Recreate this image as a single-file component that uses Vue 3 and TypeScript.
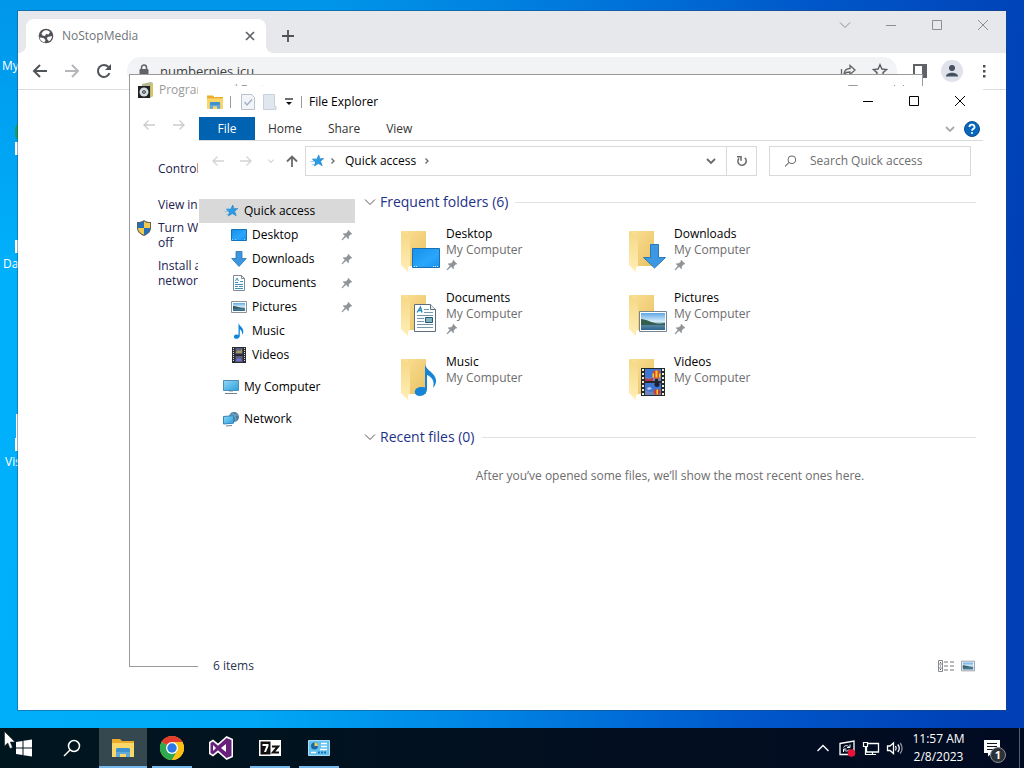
<script setup lang="ts">
import { ref } from 'vue'

interface NavItem { label: string; icon: string; level: number; pinned?: boolean; gap?: boolean }
interface Folder { name: string; art: string; pinned: boolean }
interface Task { label: string; icon: string; state: string }

const nav: NavItem[] = [
  { label: 'Quick access', icon: 'star', level: 1 },
  { label: 'Desktop', icon: 'desktop', level: 2, pinned: true },
  { label: 'Downloads', icon: 'download', level: 2, pinned: true },
  { label: 'Documents', icon: 'document', level: 2, pinned: true },
  { label: 'Pictures', icon: 'picture', level: 2, pinned: true },
  { label: 'Music', icon: 'music', level: 2 },
  { label: 'Videos', icon: 'film', level: 2 },
  { label: 'My Computer', icon: 'computer', level: 1, gap: true },
  { label: 'Network', icon: 'network', level: 1, gap: true },
]
const folders: Folder[] = [
  { name: 'Desktop', art: 'art-desktop', pinned: true },
  { name: 'Downloads', art: 'art-download', pinned: true },
  { name: 'Documents', art: 'art-document', pinned: true },
  { name: 'Pictures', art: 'art-picture', pinned: true },
  { name: 'Music', art: 'art-music', pinned: false },
  { name: 'Videos', art: 'art-video', pinned: false },
]
const tasks: Task[] = [
  { label: 'Start', icon: 'windows', state: '' },
  { label: 'Search', icon: 'search', state: '' },
  { label: 'File Explorer', icon: 'explorer', state: 'active' },
  { label: 'Chrome', icon: 'chrome', state: 'open' },
  { label: 'Visual Studio', icon: 'vs', state: '' },
  { label: '7-Zip', icon: 'zip', state: 'open' },
  { label: 'Control Panel', icon: 'panel', state: 'open' },
]
const iconSize: Record<string, string> = { windows: 'i22', search: 'i22', explorer: 'i22', chrome: 'i24', vs: 'i24' }
const tray = ['up', 'sync', 'monitor', 'speaker']
const ribbon = ['File', 'Home', 'Share', 'View']
const selected = ref('Quick access')
const address = ref('numberpies.icu')
const query = ref('')
</script>

<template>
  <svg class="defs" width="0" height="0" aria-hidden="true">
    <defs>
      <linearGradient id="g-back" x1="0" y1="0" x2="1" y2="1"><stop offset="0" stop-color="#fce197" /><stop offset="1" stop-color="#e9c162" /></linearGradient>
      <linearGradient id="g-flap" x1="0" y1="0" x2="0" y2="1"><stop offset="0" stop-color="#f6d885" /><stop offset="1" stop-color="#ffeeb6" /></linearGradient>
      <linearGradient id="g-blue" x1="0" y1="0" x2="1" y2="1"><stop offset="0" stop-color="#1690ec" /><stop offset="0.6" stop-color="#2aa6fb" /><stop offset="1" stop-color="#1793f0" /></linearGradient>
      <linearGradient id="g-sky" x1="0" y1="0" x2="0" y2="1"><stop offset="0" stop-color="#5fa8e6" /><stop offset="0.5" stop-color="#d9eefa" /><stop offset="0.65" stop-color="#5f8ea8" /><stop offset="1" stop-color="#2e648e" /></linearGradient>
      <linearGradient id="g-pc" x1="0" y1="0" x2="1" y2="1"><stop offset="0" stop-color="#8fd9f6" /><stop offset="1" stop-color="#2c9edb" /></linearGradient>
    </defs>
    <symbol id="chev" viewBox="0 0 12 12"><path d="M1 3.5l5 5 5-5" fill="none" stroke="currentColor" /></symbol>
    <symbol id="chev-b" viewBox="0 0 12 12"><path d="M2 4l4 4 4-4" fill="none" stroke="currentColor" stroke-width="1.8" /></symbol>
    <symbol id="right" viewBox="0 0 8 8"><path d="M2.500 1.500L5 4 2.500 6.500" fill="none" stroke="currentColor" stroke-width="1.300" /></symbol>
    <symbol id="min" viewBox="0 0 12 12"><path d="M1 6.500h10" stroke="currentColor" /></symbol>
    <symbol id="max" viewBox="0 0 12 12"><path d="M1.500 1.500h9v9h-9z" fill="none" stroke="currentColor" /></symbol>
    <symbol id="close" viewBox="0 0 12 12"><path d="M1 1l10 10M11 1L1 11" fill="none" stroke="currentColor" /></symbol>
    <symbol id="back" viewBox="0 0 16 16"><path d="M15 8H2M8 2L2 8l6 6" fill="none" stroke="currentColor" stroke-width="2" /></symbol>
    <symbol id="fwd" viewBox="0 0 16 16"><path d="M1 8h13M8 2l6 6-6 6" fill="none" stroke="currentColor" stroke-width="2" /></symbol>
    <symbol id="back-s" viewBox="0 0 12 12"><path d="M12 6H1M5.500 1.500L1 6l4.500 4.500" fill="none" stroke="currentColor" stroke-width="1.300" /></symbol>
    <symbol id="fwd-s" viewBox="0 0 12 12"><path d="M0 6h11M6.500 1.500L11 6l-4.500 4.500" fill="none" stroke="currentColor" stroke-width="1.300" /></symbol>
    <symbol id="up-s" viewBox="0 0 12 12"><path d="M6 12V1.500M1 6.500l5-5 5 5" fill="none" stroke="currentColor" stroke-width="1.800" /></symbol>
    <symbol id="reload" viewBox="0 0 16 16"><path d="M13.500 10.200A6 6 0 1 1 12.400 3.900L14 5.500" fill="none" stroke="currentColor" stroke-width="2" /><path d="M15 1v6H9z" fill="currentColor" /></symbol>
    <symbol id="refresh" viewBox="0 0 12 12"><path d="M8.800 2.900A4.200 4.200 0 1 1 3 3.200" fill="none" stroke="currentColor" stroke-width="1.500" /><path d="M1 1.800h4v4" fill="none" stroke="currentColor" stroke-width="1.500" /></symbol>
    <symbol id="globe" viewBox="0 0 16 16"><circle cx="8" cy="8" r="7.300" fill="#50545a" /><path d="M1.500 9.500l4 .5 2 2-1 2.500C4 14 2 12 1.500 9.500zM5 3.500C7 1.500 10 2 12 4l-1.500 2.500L8 6 7 8 4.500 7.500l-1-2zM9.500 9l4.500-1c0 2.500-1.500 4.500-3 5.200L9 11z" fill="#fff" /></symbol>
    <symbol id="lock" viewBox="0 0 12 14"><rect x="1.500" y="5" width="9" height="8" rx="1" fill="#5f6368" /><path d="M3.500 5.500V3.500a2.500 2.500 0 0 1 5 0v2" fill="none" stroke="#5f6368" stroke-width="1.500" /></symbol>
    <symbol id="share" viewBox="0 0 16 16"><path d="M1.500 6v8.500h11V12M4 11c.5-4 3-5.500 6-5.500V2.500L15 7l-5 4.500V9C7.500 9 5.500 9.500 4 11z" fill="none" stroke="#5f6368" stroke-width="1.300" /></symbol>
    <symbol id="outline-star" viewBox="0 0 16 16"><path d="M8 1.800l1.900 4.300 4.600.4-3.500 3.100 1.100 4.600L8 11.700l-4.100 2.500L5 9.600 1.500 6.500l4.600-.4z" fill="none" stroke="#5f6368" stroke-width="1.500" /></symbol>
    <symbol id="side" viewBox="0 0 16 16"><path d="M2 2h12v12H2z" fill="none" stroke="#5f6368" stroke-width="2" /><path d="M10 1h5v14h-5z" fill="#5f6368" /></symbol>
    <symbol id="user" viewBox="0 0 22 22"><circle cx="11" cy="11" r="11" fill="#dfe2ea" /><circle cx="11" cy="8" r="3" fill="#46505f" /><path d="M5 16.500c0-5 12-5 12 0z" fill="#46505f" /></symbol>
    <symbol id="dots" viewBox="0 0 16 16"><path d="M7 2h2.500v2.500H7zM7 7h2.500v2.500H7zM7 12h2.500v2.500H7z" fill="#4d5156" /></symbol>
    <symbol id="plus" viewBox="0 0 12 12"><path d="M6 0v12M0 6h12" stroke="#4d5156" stroke-width="1.800" /></symbol>
    <symbol id="tab-x" viewBox="0 0 12 12"><path d="M2 2l8 8M10 2l-8 8" stroke="#5f6368" stroke-width="1.700" /></symbol>
    <symbol id="programs" viewBox="0 0 16 16"><path d="M4 2l9-2 2 1v13l-3 2H4z" fill="#b5b98f" /><path d="M13 1l2 1v12l-2 1z" fill="#d9c65c" /><path d="M0 4h12v12H0z" fill="#222" /><circle cx="6" cy="10" r="4.500" fill="#d3dde4" /><circle cx="6" cy="10" r="1.800" fill="#222" /><circle cx="6" cy="10" r=".8" fill="#fff" /></symbol>
    <symbol id="shield" viewBox="0 0 16 16"><path d="M8 0c2 1.700 4.500 2.200 7 2v6c0 4-3.500 6.500-7 8-3.500-1.500-7-4-7-8V2c2.500.2 5-.3 7-2z" fill="#59626a" /><path d="M8 1.500V8H2V3c2.500 0 4.500-.5 6-1.500zM8 8h6c0 3.500-3 5.500-6 6.700z" fill="#2370b8" /><path d="M8 1.500C9.500 2.500 11.500 3 14 3v5H8zM2 8h6v6.700C5 13.500 2 11.500 2 8z" fill="#f3cb4a" /></symbol>
    <symbol id="explorer" viewBox="0 0 22 20"><path d="M0 1h8l2 2h12v16H0z" fill="#e9ac2b" /><path d="M0 5h22v14H0z" fill="#fbd669" /><path d="M4 19v-8l1-1h12l1 1v8h-4v-4H8v4z" fill="#3c93cf" /><path d="M4 19v-5h14v5h-4v-3H8v3z" fill="#60a9d8" /></symbol>
    <symbol id="props" viewBox="0 0 14 16"><path d="M.5.500h10l3 3v12H.5z" fill="#f1f4f8" stroke="#b9c1cb" /><path d="M3.500 8l2.500 3 5-5.500" fill="none" stroke="#9fb0c4" stroke-width="1.300" /></symbol>
    <symbol id="newf" viewBox="0 0 14 16"><path d="M.5.500h11v12h1.500v3H.5z" fill="#e1e7ef" stroke="#c8d0db" /></symbol>
    <symbol id="drop" viewBox="0 0 8 8"><path d="M0 1h8" stroke="#111" stroke-width="1.200" /><path d="M1 4h6L4 7z" fill="#111" /></symbol>
    <symbol id="help" viewBox="0 0 16 16"><circle cx="8" cy="8" r="7.500" fill="#0668bd" stroke="#0e4f8f" /><path d="M5.500 6a2.500 2.300 0 1 1 3.700 1.900C8.300 8.400 8 8.800 8 9.800" fill="none" stroke="#fff" stroke-width="1.800" /><circle cx="8" cy="12" r="1.100" fill="#fff" /></symbol>
    <symbol id="star" viewBox="0 0 16 16"><path d="M9.800 2l1 3.800 4-.3-3.200 2.800 1.600 4.400-3.900-2.200L5.300 13l1.200-4-3-2.500 4.200-.3z" fill="#2a9be4" stroke="#1c7cc4" stroke-width=".6" /><path d="M3.500 5.500h3M1.500 8.500h3.500M3 11.500h2" stroke="#7cc4f2" stroke-width=".8" /></symbol>
    <symbol id="desktop" viewBox="0 0 16 16"><path d="M.5 2.500h15v11H.5z" fill="url(#g-blue)" stroke="#1673ba" /><path d="M1 12.500h14" stroke="#8bd0ff" stroke-dasharray="1 2 1 8 1 1" /></symbol>
    <symbol id="download" viewBox="0 0 16 16"><path d="M5 .5h6v7h4.300L8 15.500.7 7.500H5z" fill="#3a96de" stroke="#2c76b6" stroke-width=".8" /></symbol>
    <symbol id="document" viewBox="0 0 16 16"><path d="M2.500.500h8l3 3v12h-11z" fill="#fff" stroke="#7e8b96" /><path d="M10.500.5v3h3" fill="none" stroke="#7e8b96" /><path d="M4.500 6L6 3l1.500 3M4 7.500h3M9 6.500h3M4 9.500h8M4 11.500h3M8 11.500h4M4 13.500h8" fill="none" stroke="#3b92bd" /></symbol>
    <symbol id="picture" viewBox="0 0 16 12"><path d="M.5.500h15v11H.5z" fill="#fff" stroke="#8a939b" /><path d="M2 2h12v8H2z" fill="url(#g-sky)" /><path d="M2 5c3 0 6 1.500 12 2.500L2 8z" fill="#365d5c" /></symbol>
    <symbol id="music" viewBox="0 0 16 16"><path d="M7.500 0C8 3 13 4.500 12.300 9.500c-.3 1-.7 1.500-1.200 2 .3-3-1-4.500-2.300-5V13c-.2 2-2 3-4 2.800-2.700-.5-2.500-3.800.3-4.300.9-.2 1.700 0 2.400.4z" fill="#1285d8" /></symbol>
    <symbol id="film" viewBox="0 0 16 16"><path d="M1 0h14v16H1z" fill="#2c2c30" /><path d="M2.500 1v14M13.500 1v14" stroke="#d9dccb" stroke-dasharray="1 1" /><path d="M4.500 1h7v6h-7zM4.500 9h7v6h-7z" fill="#5a5f83" /><path d="M5 5l2-2 2 1 2-2v4H5z" fill="#a89a5c" /><path d="M5 13l2-2 3 1 1 2H5z" fill="#6e72d0" /></symbol>
    <symbol id="video" viewBox="0 0 24 28"><path d="M0 0h24v28H0z" fill="#27282b" /><path d="M2 1v27M22 1v27" stroke="#eef0da" stroke-width="2" stroke-dasharray="2 2" /><path d="M4 1h16v12H4zM4 15h16v12H4z" fill="#3f76d2" /><path d="M4 9l5 1 5-2 6 2v3H4zM4 22l6 2 10-2v5H4z" fill="#6d86c0" /><path d="M4 10l4 1 4-1v3H4z" fill="#b83943" /><ellipse cx="15.500" cy="6.500" rx="4" ry="4.500" fill="#d84b2e" /><path d="M14.500 2.500h2v7h-2z" fill="#f3cc36" /><path d="M11.500 5.500h1.500v4h-1.500zM18 5.500h1.500v4H18z" fill="#f3cc36" /><path d="M14 11h3v2h-3z" fill="#222" /><circle cx="16" cy="16.500" r="2.500" fill="#1e1f35" /><ellipse cx="16" cy="24" rx="3.500" ry="2.800" fill="#d03c2c" /><path d="M15.500 21.500h1.500v5h-1.500z" fill="#f3cc36" /><path d="M6 20l3-1 2 2-4 1z" fill="#c4cdf0" /></symbol>
    <symbol id="computer" viewBox="0 0 16 16"><path d="M.5 1.500h15v10H.5z" fill="url(#g-pc)" stroke="#4d8fb4" /><path d="M2 14.500h12" stroke="#6b8291" /><path d="M6 12h4v1H6z" fill="#bbcdd6" /></symbol>
    <symbol id="network" viewBox="0 0 16 16"><circle cx="11" cy="6" r="5" fill="#4a7f9f" /><path d="M9 1.500c3 3 4 6 4 9M7 4h8" fill="none" stroke="#7fb0cb" /><path d="M.5 5.500l10-.8v7.500l-10 .8z" fill="url(#g-pc)" stroke="#2f86ba" /><path d="M3 15l6-.5" stroke="#6b8291" /></symbol>
    <symbol id="pin" viewBox="0 0 12 12"><path d="M7 1l4 4-1.500.3L7.700 7.300 7.500 10 5 7.500 1.500 11 .8 10.800 4 6.800 2 4.800l3-.3L7 2.500z" fill="#8e9398" stroke="#8e9398" stroke-width=".5" /></symbol>
    <symbol id="art-desktop" viewBox="0 0 42 46"><path d="M12.500 20.500h27v19h-27z" fill="url(#g-blue)" stroke="#1770b4" /><path d="M14 38.500h3M33 38.500h5" stroke="#d9f1ff" stroke-dasharray="1 1" /></symbol>
    <symbol id="art-download" viewBox="0 0 42 46"><path d="M22.500 16.500h8v13h7L26.500 40 15.500 29.500h7z" fill="#3c98e0" stroke="#2b78bd" /></symbol>
    <symbol id="art-document" viewBox="0 0 42 46"><path d="M14.500 12.500h16l5 5v22h-21z" fill="#fff" stroke="#5b6f80" /><path d="M30.500 12.500v5h5" fill="#e4edf3" stroke="#5b6f80" /><path d="M17 20.500L20.500 15l1.500 5.500M18.500 18.500h3" fill="none" stroke="#2185b6" stroke-width="1.300" /><path d="M24 17.500h5M24 20.500h9M17 23.500h16M17 26.500h7M17 29.500h7M17 32.500h16M17 35.500h16" stroke="#7597aa" /><path d="M25.500 25.500h7v5h-7z" fill="#7fb4bd" stroke="#285978" /></symbol>
    <symbol id="art-picture" viewBox="0 0 42 46"><path d="M11.500 19.500h27v20h-27z" fill="#fff" stroke="#79858e" /><path d="M13 21h24v17H13z" fill="url(#g-sky)" /><path d="M13 27c5 0 11 4 18 5 3 0 4-1 6-1v2H13z" fill="#35604f" /></symbol>
    <symbol id="art-music" viewBox="0 0 42 46"><path d="M25 8c1 7 12 9 11 18-.5 3-2 5-3 6 2-7-1-11-6-13v14c0 4-3 7-7 7-7 0-7-8 0-9 2 0 4 0 5 .6z" fill="#1785d5" /></symbol>
    <symbol id="art-video" viewBox="0 0 42 46"><use href="#video" x="13" y="12" width="24" height="28" /></symbol>
    <symbol id="windows" viewBox="0 0 22 20"><path d="M3 4l6.500-1v6.500H3zM10.500 2.800L19 1.500v8h-8.500zM3 10.500h6.500V17L3 16zM10.500 10.500H19v8l-8.500-1.300z" fill="#fff" /></symbol>
    <symbol id="search" viewBox="0 0 22 20"><circle cx="13" cy="8" r="5.500" fill="none" stroke="currentColor" stroke-width="1.500" /><path d="M9 12l-6 6" stroke="currentColor" stroke-width="1.500" /></symbol>
    <symbol id="chrome" viewBox="0 0 24 24"><circle cx="12" cy="12" r="12" fill="#fbc116" /><path d="M12 12L1.600 6A12 12 0 0 1 22.400 6z" fill="#e33b2e" /><path d="M1.600 6A12 12 0 0 0 12 24l5.200-9L12 12z" fill="#2da94f" /><path d="M12 6h10.400A12 12 0 0 1 12 24l5.200-9z" fill="#fbc116" /><circle cx="12" cy="12" r="6" fill="#fff" /><circle cx="12" cy="12" r="4.700" fill="#2b79e8" /></symbol>
    <symbol id="vs" viewBox="0 0 24 24"><path d="M0 6l4-2.500 5 4L17.500 0 24 3v18l-6.500 3L9 16.500l-5 4L0 18z" fill="#fff" /><path d="M1.500 7L4 5.500l5 4.200L17.500 2 22.500 4v16l-5 2L9 14.300l-5 4.200L1.500 17z" fill="#68217a" /><path d="M4 9l3 3-3 3zM17 8v8l-5-4z" fill="#fff" /></symbol>
    <symbol id="zip" viewBox="0 0 22 16"><path d="M0 0h22v16H0z" fill="#fff" /><path d="M1.500 1.500h10v13h-10z" fill="#111" /><path d="M3.500 4h6v2L7 12H5l2.300-6H3.500z" fill="#fff" /><path d="M13 6.500h6l-5 6h6" fill="none" stroke="#111" stroke-width="2.200" /></symbol>
    <symbol id="panel" viewBox="0 0 22 16"><path d="M.5.500h21v15H.5z" fill="#62c1ee" stroke="#a9ddf6" /><circle cx="6.500" cy="6" r="3.500" fill="#1d67a5" /><path d="M6.500 6V2.500A3.500 3.500 0 0 1 10 6z" fill="#f0cf54" /><path d="M13 3.500h6M13 6.500h6M12 9.500h7M3 12.500h5" stroke="#fff" stroke-width="1.500" /><path d="M10 12.500h9" stroke="#1c74b3" stroke-width="2" stroke-dasharray="2 1" /></symbol>
    <symbol id="up" viewBox="0 0 18 18"><path d="M3.500 12L9 6.500l5.500 5.500" fill="none" stroke="#fff" stroke-width="1.400" /></symbol>
    <symbol id="sync" viewBox="0 0 18 18"><path d="M2 4.500l14-2.500v13.500H2z" fill="none" stroke="#fff" stroke-width="1.300" /><path d="M5.500 8.500c1.500-2.500 4.500-2.500 6 0M12 5.500v3H9M11 10.500c-1 2-4 2-5 0M5.500 13v-3h3" fill="none" stroke="#fff" /><circle cx="13.500" cy="14" r="3.800" fill="#e81335" /></symbol>
    <symbol id="monitor" viewBox="0 0 18 18"><path d="M6 4.500h10.500v8.500H4.500V8" fill="none" stroke="#fff" stroke-width="1.300" /><path d="M1.500 3.500h4v4h-4zM3.500 7.500v8H14M10.500 13v2.500" fill="none" stroke="#fff" stroke-width="1.200" /></symbol>
    <symbol id="speaker" viewBox="0 0 18 18"><path d="M1.500 7h2.500L7.500 4v10.500L4 11.500H1.500z" fill="none" stroke="#fff" stroke-width="1.300" /><path d="M9.500 7c1 1.500 1 3 0 4.500M11.800 5.500c2 2.500 2 5 0 7.500" fill="none" stroke="#fff" stroke-width="1.300" /><path d="M14.200 4c2.500 3.500 2.500 7 0 10.500" fill="none" stroke="#89909a" stroke-width="1.300" /></symbol>
    <symbol id="note" viewBox="0 0 18 18"><path d="M1 1h16v13h-8l-4 3.500V14H1z" fill="#fff" /><path d="M4 4.500h10M4 7.500h10M4 10.500h7" stroke="#10151e" /></symbol>
    <symbol id="list-view" viewBox="0 0 16 12"><path d="M.5.500h4v11h-4zM.5 4h4M.5 8h4" fill="none" stroke="#858a8e" /><path d="M6 2h4M12 2h4M6 6h4M12 6h4M6 10h4M12 10h4" stroke="#777" /><path d="M2 2h1v1H2zM2 5.500h1v1H2zM2 9h1v1H2z" fill="#555" /></symbol>
  </svg>

  <div class="screen">
    <div class="desktop">
      <div class="shortcut s1"><span>My</span></div>
      <div class="shortcut s2"><i class="green"></i><i class="arrow"></i></div>
      <div class="shortcut s3"><i class="arrow"></i><span>Da</span></div>
      <div class="shortcut s4"><i class="page"></i><i class="arrow"></i><span>Vis</span></div>

      <section class="window browser" aria-label="NoStopMedia">
        <header class="tabstrip">
          <div class="tab">
            <svg class="i16"><use href="#globe" /></svg>
            <span class="tab-title">NoStopMedia</span>
            <button class="plain" aria-label="Close tab"><svg class="i12"><use href="#tab-x" /></svg></button>
          </div>
          <button class="plain new-tab" aria-label="New tab"><svg class="i12"><use href="#plus" /></svg></button>
          <div class="caption">
            <button aria-label="Search tabs"><svg class="i12"><use href="#chev" /></svg></button>
            <button aria-label="Minimize"><svg class="i12"><use href="#min" /></svg></button>
            <button aria-label="Maximize"><svg class="i12"><use href="#max" /></svg></button>
            <button aria-label="Close"><svg class="i12"><use href="#close" /></svg></button>
          </div>
        </header>
        <div class="toolbar">
          <button class="tool" aria-label="Back"><svg class="i16"><use href="#back" /></svg></button>
          <button class="tool dim" aria-label="Forward"><svg class="i16"><use href="#fwd" /></svg></button>
          <button class="tool" aria-label="Reload"><svg class="i16"><use href="#reload" /></svg></button>
          <div class="omnibox">
            <svg class="lock"><use href="#lock" /></svg>
            <input v-model="address" type="text" aria-label="Address" />
            <button class="tool" aria-label="Share"><svg class="i16"><use href="#share" /></svg></button>
            <button class="tool" aria-label="Bookmark"><svg class="i16"><use href="#outline-star" /></svg></button>
          </div>
          <button class="tool" aria-label="Side panel"><svg class="i16"><use href="#side" /></svg></button>
          <button class="tool" aria-label="Profile"><svg class="i22"><use href="#user" /></svg></button>
          <button class="tool" aria-label="Menu"><svg class="i16"><use href="#dots" /></svg></button>
        </div>
      </section>

      <section class="window programs" aria-label="Programs and Features">
        <header class="programs-title">
          <svg class="i16"><use href="#programs" /></svg>
          <span>Programs and Features</span>
          <div class="caption">
            <button aria-label="Minimize"><svg class="i12"><use href="#min" /></svg></button>
            <button aria-label="Maximize"><svg class="i12"><use href="#max" /></svg></button>
            <button aria-label="Close"><svg class="i12"><use href="#close" /></svg></button>
          </div>
        </header>
        <div class="programs-nav">
          <svg class="i12"><use href="#back-s" /></svg>
          <svg class="i12"><use href="#fwd-s" /></svg>
        </div>
        <nav class="programs-links">
          <a href="#" class="home">Control</a>
          <a href="#">View ins</a>
          <a href="#" class="admin"><svg class="i16"><use href="#shield" /></svg>Turn W<br />off</a>
          <a href="#">Install a<br />network</a>
        </nav>
      </section>

      <section class="window explorer" aria-label="File Explorer">
        <header class="titlebar">
          <svg class="i16"><use href="#explorer" /></svg>
          <i class="rule"></i>
          <button class="plain" aria-label="Properties"><svg class="sheet"><use href="#props" /></svg></button>
          <button class="plain" aria-label="New folder"><svg class="sheet"><use href="#newf" /></svg></button>
          <button class="plain" aria-label="Customize"><svg class="i8"><use href="#drop" /></svg></button>
          <i class="rule last"></i>
          <h1>File Explorer</h1>
          <div class="caption">
            <button aria-label="Minimize"><svg class="i12"><use href="#min" /></svg></button>
            <button aria-label="Maximize"><svg class="i12"><use href="#max" /></svg></button>
            <button aria-label="Close"><svg class="i12"><use href="#close" /></svg></button>
          </div>
        </header>
        <div class="ribbon">
          <button v-for="r in ribbon" :key="r" :class="{ file: r === 'File' }">{{ r }}</button>
          <div class="ribbon-end">
            <svg class="i12"><use href="#chev-b" /></svg>
            <button class="plain" aria-label="Help"><svg class="i16"><use href="#help" /></svg></button>
          </div>
        </div>
        <div class="address-row">
          <button class="step faint" aria-label="Back"><svg class="i12"><use href="#back-s" /></svg></button>
          <button class="step faint" aria-label="Forward"><svg class="i12"><use href="#fwd-s" /></svg></button>
          <button class="recent faint" aria-label="Recent locations"><svg class="i8"><use href="#chev-b" /></svg></button>
          <button class="up" aria-label="Up"><svg class="i12"><use href="#up-s" /></svg></button>
          <div class="address">
            <svg class="i16"><use href="#star" /></svg>
            <svg class="i8"><use href="#right" /></svg>
            <a href="#">Quick access</a>
            <svg class="i8"><use href="#right" /></svg>
            <button class="plain history" aria-label="Previous locations"><svg class="i12"><use href="#chev-b" /></svg></button>
            <button class="refresh" aria-label="Refresh"><svg class="i12"><use href="#refresh" /></svg></button>
          </div>
          <label class="search">
            <svg class="glass"><use href="#search" /></svg>
            <input v-model="query" type="text" placeholder="Search Quick access" aria-label="Search Quick access" />
          </label>
        </div>
        <div class="body">
          <nav class="side">
            <button
              v-for="n in nav"
              :key="n.label"
              :class="['level' + n.level, { selected: n.label === selected, gap: n.gap }]"
              @click="selected = n.label"
            >
              <svg class="i16"><use :href="'#' + n.icon" /></svg>
              <span>{{ n.label }}</span>
              <svg v-if="n.pinned" class="i12 pin"><use href="#pin" /></svg>
            </button>
          </nav>
          <main>
            <h2><svg class="i12"><use href="#chev" /></svg>Frequent folders (6)</h2>
            <ul class="tiles">
              <li v-for="f in folders" :key="f.name">
                <svg class="art" viewBox="0 0 42 46">
                  <path d="M1 3h25v35H9z" fill="url(#g-back)" />
                  <path d="M1 3l9 6v29l-2 1.500V44L1 37z" fill="url(#g-flap)" />
                  <use :href="'#' + f.art" width="42" height="46" />
                </svg>
                <div class="meta">
                  <span>{{ f.name }}</span>
                  <span class="where">My Computer</span>
                  <svg v-if="f.pinned" class="i12"><use href="#pin" /></svg>
                </div>
              </li>
            </ul>
            <h2 class="later"><svg class="i12"><use href="#chev" /></svg>Recent files (0)</h2>
            <p>After you’ve opened some files, we’ll show the most recent ones here.</p>
          </main>
        </div>
        <footer>
          <span>6 items</span>
          <button class="plain" aria-label="Details view"><svg class="list"><use href="#list-view" /></svg></button>
          <button class="plain" aria-label="Thumbnail view"><svg class="thumb"><use href="#picture" /></svg></button>
        </footer>
      </section>
    </div>

    <footer class="taskbar">
      <button v-for="t in tasks" :key="t.label" :class="['task', t.state]" :aria-label="t.label">
        <svg :class="iconSize[t.icon] ?? 'wide'"><use :href="'#' + t.icon" /></svg>
      </button>
      <div class="tray">
        <button v-for="t in tray" :key="t" class="tray-icon" :aria-label="t"><svg class="i18"><use :href="'#' + t" /></svg></button>
        <button class="clock"><span>11:57 AM</span><span>2/8/2023</span></button>
        <button class="notes" aria-label="Notifications"><svg class="i18"><use href="#note" /></svg><b>1</b></button>
        <i class="peek"></i>
      </div>
    </footer>
    <svg class="cursor" viewBox="0 0 12 18"><path d="M.5.500v14.500l3.300-3 2.200 5.500 2.500-1L6.300 11H11z" fill="#fff" stroke="#222" stroke-width=".6" /></svg>
  </div>
</template>

<style>
html, body { margin: 0; background: #0068cc; }
</style>

<style scoped>
* { box-sizing: border-box; }
.defs { position: absolute; }
.screen {
  position: relative;
  display: flex;
  flex-direction: column;
  height: 100vh;
  overflow: hidden;
  font: 12px/16px "Open Sans", "Noto Sans", sans-serif;
  color: #111;
}
button { font: inherit; color: inherit; border: 0; padding: 0; background: none; display: flex; align-items: center; justify-content: center; }
input { font: inherit; color: inherit; border: 0; padding: 0; background: none; outline: 0; min-width: 0; flex: 1; }
a { color: inherit; text-decoration: none; }
svg { display: block; flex: none; }
.i8 { width: 8px; height: 8px; }
.i12 { width: 12px; height: 12px; }
.i16 { width: 16px; height: 16px; }
.i18 { width: 18px; height: 18px; }
.i22 { width: 22px; height: 22px; }
.i24 { width: 24px; height: 24px; }
.wide { width: 22px; height: 16px; }

.desktop {
  position: relative;
  flex: 1;
  background: linear-gradient(170deg, rgba(0, 70, 180, .25), rgba(0, 70, 180, 0) 30%),
    linear-gradient(96deg, #00b1fc 0%, #00a8f6 30%, #0082e4 52%, #0059cb 74%, #003fb6 96%);
}
.shortcut { position: absolute; color: #fff; white-space: nowrap; display: flex; flex-direction: column; }
.s1 { left: 2px; top: 58px; }
.s2 { left: 15px; top: 122px; }
.s3 { left: 3px; top: 240px; }
.s4 { left: 5px; top: 414px; }
.shortcut i { width: 8px; }
.green { height: 20px; background: #15a063; border-radius: 8px 0 0 8px; }
.arrow { height: 13px; background: #fff; align-self: flex-start; }
.page { height: 24px; background: #fff; margin-left: 11px; }
.s3 .arrow { margin-left: 12px; margin-bottom: 3px; }
.s4 .arrow { margin-left: 10px; margin-bottom: 3px; }

.window { position: absolute; background: #fff; display: flex; flex-direction: column; }
.caption { display: flex; margin-left: auto; align-self: stretch; }
.caption button { width: 46px; height: 30px; }

.browser { inset: 11px 18px 18px 18px; outline: 1px solid rgba(30, 70, 110, .45); }
.tabstrip { display: flex; background: #e7e8eb; height: 42px; color: #70757a; }
.tabstrip .caption { color: #8b8e92; }
.tabstrip .caption button { height: 28px; }
.tab {
  position: relative;
  display: flex;
  align-items: center;
  width: 240px;
  margin: 8px 0 0 8px;
  padding: 0 10px 0 12px;
  background: #fff;
  border-radius: 8px 8px 0 0;
}
.tab::before, .tab::after { content: ""; position: absolute; bottom: 0; width: 8px; height: 8px; }
.tab::before { left: -8px; background: radial-gradient(circle at 0 0, transparent 8px, #fff 8px); }
.tab::after { right: -8px; background: radial-gradient(circle at 100% 0, transparent 8px, #fff 8px); }
.tab-title { flex: 1; margin-left: 8px; }
.new-tab { margin: 8px 0 0 16px; }
.toolbar { display: flex; align-items: center; height: 37px; padding: 0 6px; border-bottom: 1px solid #dadce0; color: #50545a; }
.tool { width: 32px; height: 28px; }
.dim { color: #b5b7ba; }
.omnibox { flex: 1; display: flex; align-items: center; height: 28px; margin: 0 7px; padding: 0 1px 0 11px; border-radius: 14px; background: #f1f3f4; font-size: 13px; color: #3c4043; }
.lock { width: 12px; height: 14px; margin-right: 10px; }

.programs { left: 129px; top: 74px; width: 794px; height: 593px; border: 1px solid #9a9a9a; }
.programs-title { display: flex; align-items: center; height: 30px; padding-left: 8px; color: #999; }
.programs-title span { margin-left: 5px; }
.programs-nav { display: flex; gap: 18px; padding: 14px 13px; color: #ccc; }
.programs-links { display: flex; flex-direction: column; gap: 8px; padding: 16px 0 0 28px; line-height: 15px; color: #1c2150; }
.programs-links .home { margin-bottom: 13px; }
.admin { position: relative; }
.admin svg { position: absolute; left: -22px; top: 0; }

.explorer { inset: 86px 41px 48px 198px; padding-left: 1px; color: #000; }
.titlebar { display: flex; align-items: center; height: 31px; padding-left: 8px; }
.rule { width: 1px; height: 12px; background: #999; margin: 0 10px 0 7px; }
.rule.last { margin: 0 7px 0 8px; }
.sheet { width: 14px; height: 16px; margin-right: 8px; }
h1 { margin: 0; font: inherit; }
.ribbon { display: flex; height: 24px; border-bottom: 1px solid #dadbdc; color: #333; }
.ribbon > button { padding: 0 13px; }
.ribbon > .file { width: 56px; background: #0063b1; color: #fff; }
.ribbon-end { display: flex; align-items: center; gap: 8px; margin-left: auto; padding-right: 3px; color: #aaa; }
.address-row { display: flex; align-items: center; height: 30px; margin: 5px 12px 0 11px; color: #6a6a6a; }
.step { width: 16px; margin-right: 12px; }
.faint { color: #d4d4d4; }
.recent { width: 8px; margin-left: 1px; }
.up { width: 14px; margin: 0 6px 0 10px; }
.address { display: flex; align-items: center; align-self: stretch; flex: 1; border: 1px solid #d9d9d9; padding-left: 3px; }
.address a { color: #000; margin: 0 7px 0 8px; }
.address > .i8 { margin-left: 4px; }
.address a + .i8 { margin-left: 0; }
.history { margin-left: auto; width: 30px; height: 28px; }
.refresh { width: 30px; align-self: stretch; border-left: 1px solid #d9d9d9; }
.search { display: flex; align-items: center; align-self: stretch; width: 202px; margin-left: 12px; padding-left: 13px; border: 1px solid #d9d9d9; }
.glass { width: 15px; height: 14px; margin-right: 12px; }
.search input::placeholder { color: #6d6d6d; opacity: 1; }
.body { display: flex; flex: 1; min-height: 0; padding-top: 14px; }
.side { width: 156px; padding-top: 9px; }
.side button { width: 100%; height: 24px; justify-content: flex-start; padding-right: 2px; gap: 5px; }
.side .level1 { padding-left: 24px; }
.side .level2 { padding-left: 32px; }
.side .gap { margin-top: 8px; }
.side .selected { background: #d9d9d9; }
.pin { margin-left: auto; }
main { flex: 1; min-width: 0; padding: 0 7px 0 9px; }
h2 { display: flex; align-items: center; height: 24px; margin: 0; font-size: 14px; font-weight: 400; color: #1e3287; }
h2 svg { margin-right: 4px; color: #555; }
h2::after { content: ""; flex: 1; height: 1px; margin-left: 7px; background: #e2e2e2; }
.later { margin-top: 15px; }
.tiles { list-style: none; display: grid; grid-template-columns: repeat(auto-fill, 228px); margin: 4px 0 0; padding: 0 0 0 36px; }
.tiles li { display: flex; height: 64px; }
.art { width: 42px; height: 46px; margin-top: 10px; }
.meta { display: flex; flex-direction: column; margin: 8px 0 0 4px; }
.meta svg { margin-top: 1px; }
.where { color: #6d6d6d; }
p { margin: 19px 0 0; text-align: center; color: #6d6d6d; }
.explorer footer { display: flex; align-items: center; height: 28px; padding: 0 8px 0 14px; color: #2a3550; }
.explorer footer span { flex: 1; }
.list { width: 16px; height: 12px; }
.thumb { width: 14px; height: 12px; margin-left: 7px; }

.taskbar { display: flex; flex: none; gap: 1px; height: 40px; background: linear-gradient(90deg, #00161f, #030f20 60%, #000a22); color: #fff; }
.task { position: relative; width: 48px; }
.task:first-child { width: 47px; }
.task:nth-child(2) { margin-right: 2px; }
.task.active { background: #35474f; }
.task.open::after, .task.active::after { content: ""; position: absolute; bottom: 0; left: 4px; right: 4px; height: 2px; background: #76b9ed; }
.task.active::after { left: 0; right: 0; }
.tray { display: flex; margin-left: auto; }
.tray-icon { width: 24px; }
.clock { flex-direction: column; width: 63px; line-height: 18px; }
.notes { position: relative; width: 44px; }
.notes b { position: absolute; left: 20px; top: 19px; width: 16px; height: 16px; border: 1px solid #8a8f95; border-radius: 8px; background: #2c3138; font-size: 11px; line-height: 14px; }
.peek { width: 5px; margin-left: 5px; border-left: 1px solid #56606c; }
.cursor { position: absolute; left: 4px; bottom: 18px; width: 12px; height: 20px; }
</style>
